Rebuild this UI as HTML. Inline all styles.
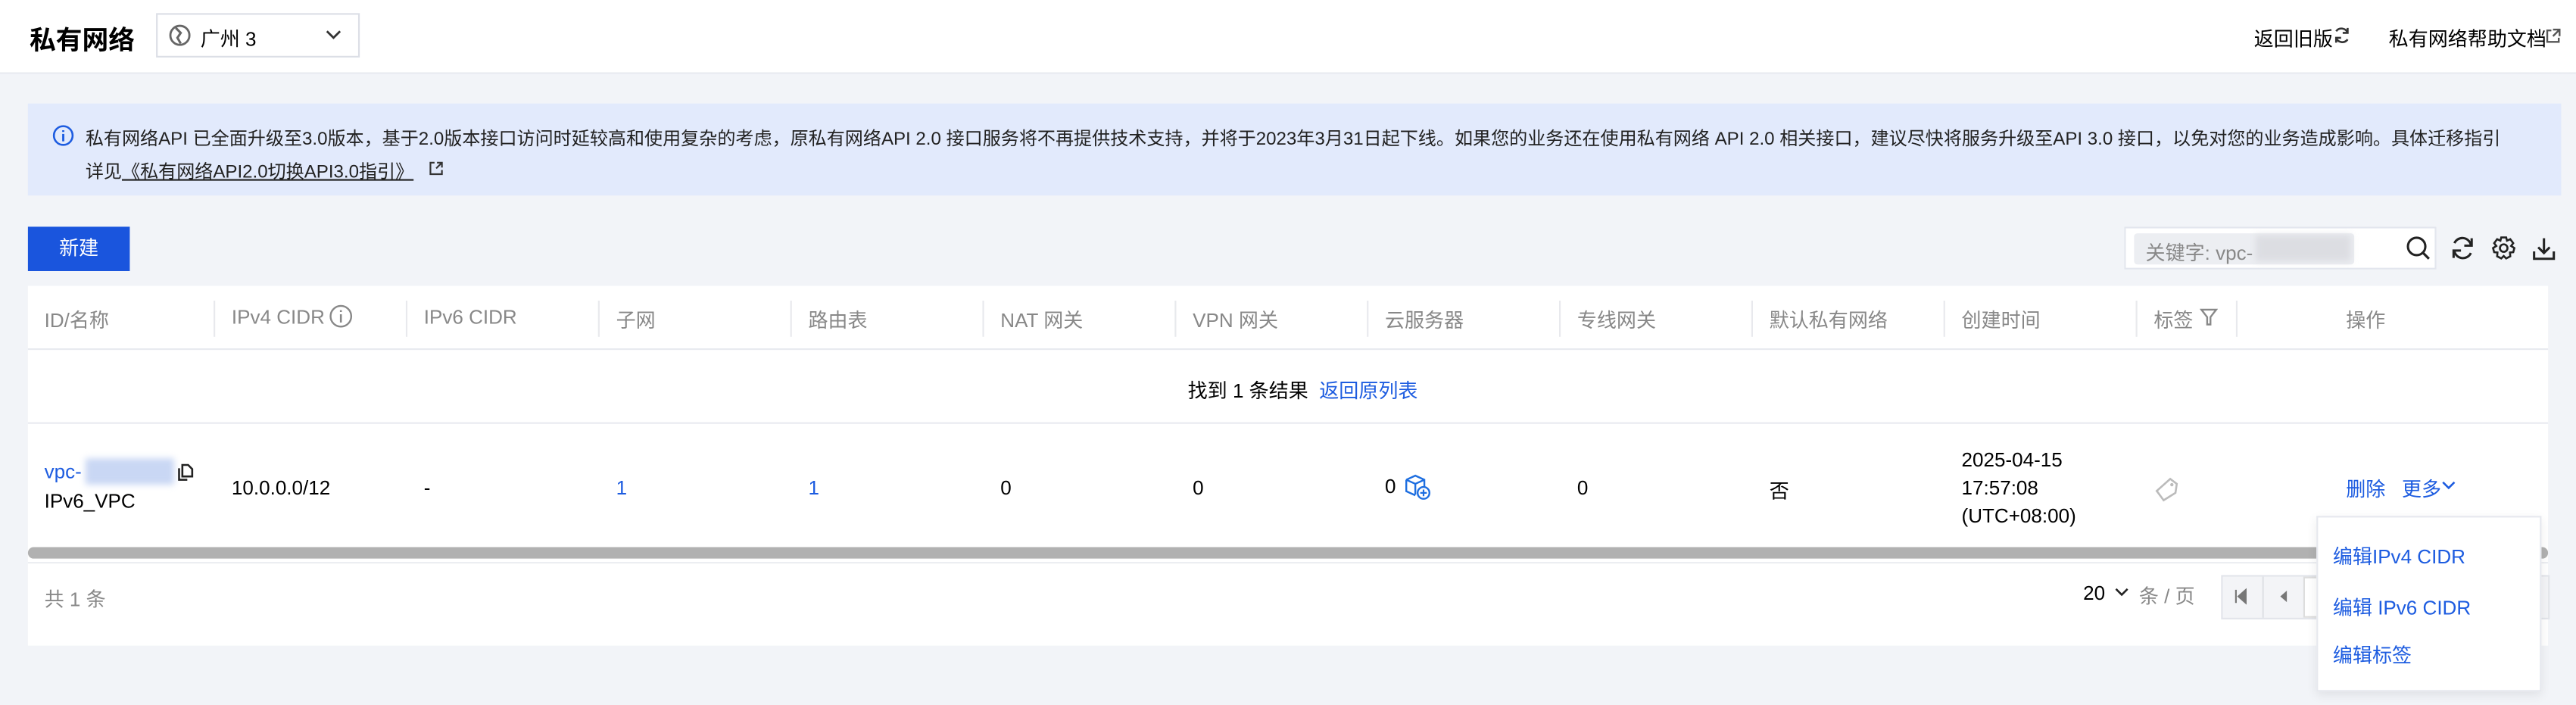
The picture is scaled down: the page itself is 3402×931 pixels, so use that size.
<!DOCTYPE html>
<html><head><meta charset="utf-8"><style>
*{box-sizing:border-box;margin:0;padding:0}
html,body{width:3402px;height:930px;overflow:hidden;background:#f2f4f8}
#w{position:absolute;left:0;top:0;width:1568px;height:429px;transform:scale(2.16964);transform-origin:0 0;font-family:"Liberation Sans","Noto Sans CJK SC",sans-serif;font-size:12px;color:#000;background:#f2f4f8}
.a{position:absolute;white-space:nowrap}
.blue{color:#1d5ce0}
.gray{color:#888}
.hd{color:#888;top:186px}
.sep{position:absolute;top:183px;width:1px;height:22px;background:#e8e9ed}
</style></head><body><div id="w">
<div class="a" style="left:0;top:0;width:1568px;height:45px;background:#fff;border-bottom:1px solid #e8eaf0"></div>
<div class="a" style="left:18px;top:11px;font-size:16px;font-weight:bold">私有网络</div>
<div class="a" style="left:95px;top:8px;width:124px;height:27px;border:1px solid #dcdfe6;background:#fff"></div>
<svg class="a" style="left:103px;top:15px" width="13" height="13" viewBox="0 0 13 13"><circle cx="6.5" cy="6.5" r="5.8" fill="none" stroke="#666" stroke-width="1.3"/><path d="M4 2 L7 5 L5 8 L7 11.5" fill="none" stroke="#666" stroke-width="1.4"/></svg>
<div class="a" style="left:122px;top:15px">广州 3</div>
<svg class="a" style="left:198px;top:17px" width="10" height="8"><path d="M1 2 L5 6 L9 2" fill="none" stroke="#333" stroke-width="1.3"/></svg>
<div class="a" style="left:1372px;top:15px">返回旧版</div>
<svg class="a" style="left:1420px;top:16px" width="11" height="11" viewBox="0 0 11 11"><path d="M9 4 A4 4 0 0 0 2 3 M2 7 A4 4 0 0 0 9 8" fill="none" stroke="#333" stroke-width="1.2"/><path d="M9 1 V4 H6 M2 10 V7 H5" fill="none" stroke="#333" stroke-width="1.2"/></svg>
<div class="a" style="left:1454px;top:15px">私有网络帮助文档</div>
<svg class="a" style="left:1549px;top:17px" width="10" height="10"><path d="M4 1.5 H1.5 V8.5 H8.5 V6 M5 1 H9 V5 M9 1 L5 5" fill="none" stroke="#555" stroke-width="1.1"/></svg>

<div class="a" style="left:17px;top:63px;width:1542px;height:56px;background:#e2eafc"></div>
<svg class="a" style="left:32px;top:76px" width="13" height="13"><circle cx="6.5" cy="6.5" r="5.7" fill="none" stroke="#1d5ce0" stroke-width="1.2"/><path d="M6.5 5.5 V10 M6.5 3.3 V4.3" stroke="#1d5ce0" stroke-width="1.3"/></svg>
<div class="a" style="left:52px;top:76px;color:#222;font-size:11.1px">私有网络API 已全面升级至3.0版本，基于2.0版本接口访问时延较高和使用复杂的考虑，原私有网络API 2.0 接口服务将不再提供技术支持，并将于2023年3月31日起下线。如果您的业务还在使用私有网络 API 2.0 相关接口，建议尽快将服务升级至API 3.0 接口，以免对您的业务造成影响。具体迁移指引</div>
<div class="a" style="left:52px;top:96px;color:#222;font-size:11.1px">详见<span style="text-decoration:underline">《私有网络API2.0切换API3.0指引》</span></div>
<svg class="a" style="left:261px;top:98px" width="9" height="9"><path d="M3.5 1 H1 V8 H8 V5.5 M5 1 H8 V4 M8 1 L4.5 4.5" fill="none" stroke="#333" stroke-width="1"/></svg>

<div class="a" style="left:17px;top:138px;width:62px;height:27px;background:#1a55dd;color:#fff;text-align:center;line-height:27px">新建</div>
<div class="a" style="left:1293px;top:138px;width:190px;height:26px;background:#fff;border:1px solid #e3e6ee"></div>
<div class="a" style="left:1299px;top:142px;width:134px;height:19px;background:#eceef2;border-radius:2px"></div>
<div class="a gray" style="left:1306px;top:145px">关键字: vpc-</div>
<div class="a" style="left:1373px;top:143px;width:58px;height:16px;background:#dcdde2;filter:blur(2px)"></div>
<svg class="a" style="left:1464px;top:143px" width="16" height="16"><circle cx="7" cy="7" r="5.3" fill="none" stroke="#222" stroke-width="1.4"/><path d="M11 11 L14.5 14.5" stroke="#222" stroke-width="1.5"/></svg>
<svg class="a" style="left:1491px;top:143px" width="16" height="16" viewBox="0 0 16 16"><path d="M13 6 A5.3 5.3 0 0 0 3 5 M3 10 A5.3 5.3 0 0 0 13 11" fill="none" stroke="#222" stroke-width="1.4"/><path d="M13.5 2 V6.5 H9 M2.5 14 V9.5 H7" fill="none" stroke="#222" stroke-width="1.4"/></svg>
<svg class="a" style="left:1516px;top:143px" width="16" height="16" viewBox="0 0 16 16"><path d="M6.5 1.5 H9.5 L10 3.5 L12 2.6 L13.8 5 L12.5 6.7 L14.5 8 L13.8 10.5 L11.8 10.7 L12 13 L9.5 14.3 L8 12.8 L6.5 14.3 L4 13 L4.2 10.7 L2.2 10.5 L1.5 8 L3.5 6.7 L2.2 5 L4 2.6 L6 3.5 Z" fill="none" stroke="#222" stroke-width="1.2"/><circle cx="8" cy="8" r="2.3" fill="none" stroke="#222" stroke-width="1.2"/></svg>
<svg class="a" style="left:1541px;top:144px" width="15" height="15"><path d="M7.5 1 V10 M4 6.5 L7.5 10 L11 6.5 M1.5 9 V13.5 H13.5 V9" fill="none" stroke="#222" stroke-width="1.4"/></svg>

<div class="a" style="left:17px;top:174px;width:1534px;height:219px;background:#fff"></div>
<div class="a" style="left:17px;top:212px;width:1534px;height:1px;background:#e8eaf0"></div>
<div class="a" style="left:17px;top:257px;width:1534px;height:1px;background:#e8eaf0"></div>
<div class="sep" style="left:130px"></div><div class="sep" style="left:247px"></div><div class="sep" style="left:364px"></div><div class="sep" style="left:481px"></div><div class="sep" style="left:598px"></div><div class="sep" style="left:715px"></div><div class="sep" style="left:832px"></div><div class="sep" style="left:949px"></div><div class="sep" style="left:1066px"></div><div class="sep" style="left:1183px"></div><div class="sep" style="left:1300px"></div><div class="sep" style="left:1361px"></div>
<div class="a hd" style="left:27px">ID/名称</div>
<div class="a hd" style="left:141px">IPv4 CIDR</div>
<svg class="a" style="left:200px;top:185px" width="15" height="15"><circle cx="7.5" cy="7.5" r="6.3" fill="none" stroke="#888" stroke-width="1.1"/><path d="M7.5 6.3 V11.3 M7.5 3.8 V4.9" stroke="#888" stroke-width="1.2"/></svg>
<div class="a hd" style="left:258px">IPv6 CIDR</div>
<div class="a hd" style="left:375px">子网</div>
<div class="a hd" style="left:492px">路由表</div>
<div class="a hd" style="left:609px">NAT 网关</div>
<div class="a hd" style="left:726px">VPN 网关</div>
<div class="a hd" style="left:843px">云服务器</div>
<div class="a hd" style="left:960px">专线网关</div>
<div class="a hd" style="left:1077px">默认私有网络</div>
<div class="a hd" style="left:1194px">创建时间</div>
<div class="a hd" style="left:1311px">标签</div>
<svg class="a" style="left:1339px;top:187px" width="11" height="12"><path d="M1 1.5 H10 L6.5 6 V10.5 H4.5 V6 Z" fill="none" stroke="#888" stroke-width="1.1"/></svg>
<div class="a hd" style="left:1428px">操作</div>

<div class="a" style="left:723px;top:229px">找到 1 条结果 <span class="blue">&nbsp;返回原列表</span></div>

<div class="a blue" style="left:27px;top:280px">vpc-</div>
<div class="a" style="left:52px;top:279px;width:54px;height:16px;background:#c9d7f4;filter:blur(2px)"></div>
<svg class="a" style="left:108px;top:282px" width="10" height="11"><path d="M3 1 H6.5 L9 3.5 V8 H3 Z M1 3 V10 H6" fill="none" stroke="#222" stroke-width="1.2"/></svg>
<div class="a" style="left:27px;top:298px">IPv6_VPC</div>
<div class="a" style="left:141px;top:290px">10.0.0.0/12</div>
<div class="a" style="left:258px;top:290px">-</div>
<div class="a blue" style="left:375px;top:290px">1</div>
<div class="a blue" style="left:492px;top:290px">1</div>
<div class="a" style="left:609px;top:290px">0</div>
<div class="a" style="left:726px;top:290px">0</div>
<div class="a" style="left:843px;top:289px">0</div>
<svg class="a" style="left:854px;top:288px" width="18" height="17"><path d="M2 4 L7.5 1.5 L13 4 V8 M2 4 V11 L7.5 13.5 M2 4 L7.5 6.5 L13 4 M7.5 6.5 V13" fill="none" stroke="#1d6ee0" stroke-width="1.1"/><circle cx="12.5" cy="12" r="3.6" fill="#fff" stroke="#1d6ee0" stroke-width="1.1"/><path d="M12.5 10 V14 M10.5 12 H14.5" stroke="#1d6ee0" stroke-width="1"/></svg>
<div class="a" style="left:960px;top:290px">0</div>
<div class="a" style="left:1077px;top:290px">否</div>
<div class="a" style="left:1194px;top:272px;line-height:17px">2025-04-15<br>17:57:08<br>(UTC+08:00)</div>
<svg class="a" style="left:1311px;top:290px" width="16" height="16"><path d="M10 1.5 L14 4.5 L13.2 10 L6 14.5 L1.8 8.8 Z" fill="none" stroke="#bbb" stroke-width="1.2"/><circle cx="11" cy="5" r="1" fill="#bbb"/></svg>
<div class="a blue" style="left:1428px;top:289px">删除&nbsp;&nbsp; 更多</div>
<svg class="a" style="left:1486px;top:292px" width="9" height="7"><path d="M1 1.5 L4.5 5 L8 1.5" fill="none" stroke="#1d5ce0" stroke-width="1.2"/></svg>

<div class="a" style="left:17px;top:333px;width:1534px;height:7px;background:#b1b1b1;border-radius:4px"></div>
<div class="a" style="left:17px;top:342px;width:1534px;height:1px;background:#eceef2"></div>
<div class="a gray" style="left:27px;top:356px">共 1 条</div>
<div class="a" style="left:1268px;top:354px">20</div>
<svg class="a" style="left:1287px;top:357px" width="9" height="7"><path d="M1 1.5 L4.5 5 L8 1.5" fill="none" stroke="#222" stroke-width="1.2"/></svg>
<div class="a gray" style="left:1302px;top:354px">条 / 页</div>
<div class="a" style="left:1352px;top:350px;width:200px;height:27px;background:#f3f4f7;border:1px solid #e3e5eb"></div>
<div class="a" style="left:1377px;top:351px;width:1px;height:25px;background:#dfe1e6"></div>
<div class="a" style="left:1402px;top:351px;width:30px;height:25px;background:#fff;border:1px solid #ddd"></div>
<svg class="a" style="left:1359px;top:358px" width="10" height="10"><path d="M2 1 V9 M8 1 L3.5 5 L8 9 Z" fill="#777" stroke="#777"/></svg>
<svg class="a" style="left:1385px;top:358px" width="10" height="10"><path d="M7 1.5 L3 5 L7 8.5 Z" fill="#777"/></svg>

<div class="a" style="left:1410px;top:314px;width:137px;height:107px;background:#fff;border:1px solid #e6e8ee;box-shadow:0 2px 6px rgba(0,0,0,.08)"></div>
<div class="a blue" style="left:1420px;top:330px">编辑IPv4 CIDR</div>
<div class="a blue" style="left:1420px;top:361px">编辑 IPv6 CIDR</div>
<div class="a blue" style="left:1420px;top:390px">编辑标签</div>
</div></body></html>
